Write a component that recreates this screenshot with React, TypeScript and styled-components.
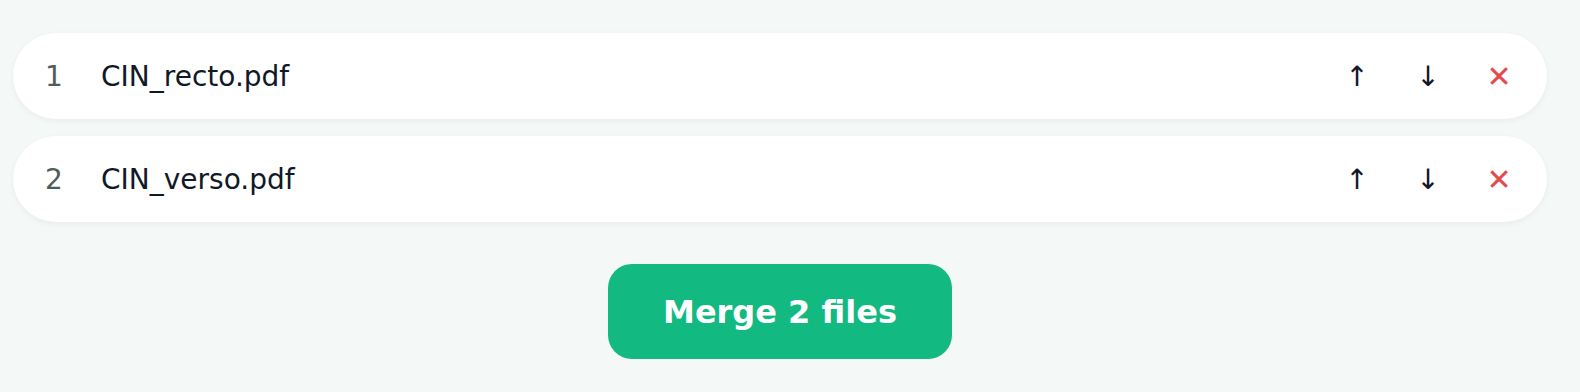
import React from "react";
import styled, { createGlobalStyle } from "styled-components";

const Global = createGlobalStyle`
  html, body { margin: 0; padding: 0; background: #f4f8f7; }
  body { font-family: "DejaVu Sans", Verdana, sans-serif; }
`;

const Page = styled.div`
  box-sizing: border-box;
  width: 1580px;
  height: 392px;
  padding: 33px 33px 0 13px;
  display: flex;
  flex-direction: column;
  background: #f4f8f7;
`;

const List = styled.div`
  display: flex;
  flex-direction: column;
  gap: 17px;
`;

const Row = styled.div`
  height: 86px;
  box-sizing: border-box;
  display: flex;
  align-items: center;
  padding: 0 24px 0 32px;
  background: #ffffff;
  border-radius: 43px;
  box-shadow: 0 2px 6px rgba(15, 40, 35, 0.05);
`;

const Index = styled.span`
  width: 56px;
  flex: none;
  font-size: 28px;
  color: #525c5b;
`;

const Name = styled.span`
  flex: 1;
  font-size: 28px;
  color: #111827;
`;

const Actions = styled.div`
  display: flex;
  gap: 23px;
`;

const IconButton = styled.button<{ $danger?: boolean }>`
  width: 48px;
  height: 48px;
  border: none;
  background: transparent;
  padding: 0;
  display: flex;
  align-items: center;
  justify-content: center;
  font-family: "DejaVu Sans", sans-serif;
  font-size: ${(p) => (p.$danger ? "30px" : "28px")};
  color: ${(p) => (p.$danger ? "#e5484d" : "#111827")};
  cursor: pointer;
`;

const Footer = styled.div`
  display: flex;
  justify-content: center;
  padding-top: 42px;
`;

const MergeButton = styled.button`
  width: 344px;
  height: 95px;
  border: none;
  border-radius: 24px;
  background: #12b981;
  color: #ffffff;
  font-family: "DejaVu Sans", sans-serif;
  font-weight: bold;
  font-size: 32px;
  cursor: pointer;
`;

const files = ["CIN_recto.pdf", "CIN_verso.pdf"];

export default function App() {
  return (
    <>
      <Global />
      <Page>
        <List>
          {files.map((f, i) => (
            <Row key={f}>
              <Index>{i + 1}</Index>
              <Name>{f}</Name>
              <Actions>
                <IconButton aria-label="Move up">↑</IconButton>
                <IconButton aria-label="Move down">↓</IconButton>
                <IconButton $danger aria-label="Remove">✕</IconButton>
              </Actions>
            </Row>
          ))}
        </List>
        <Footer>
          <MergeButton>Merge {files.length} files</MergeButton>
        </Footer>
      </Page>
    </>
  );
}
